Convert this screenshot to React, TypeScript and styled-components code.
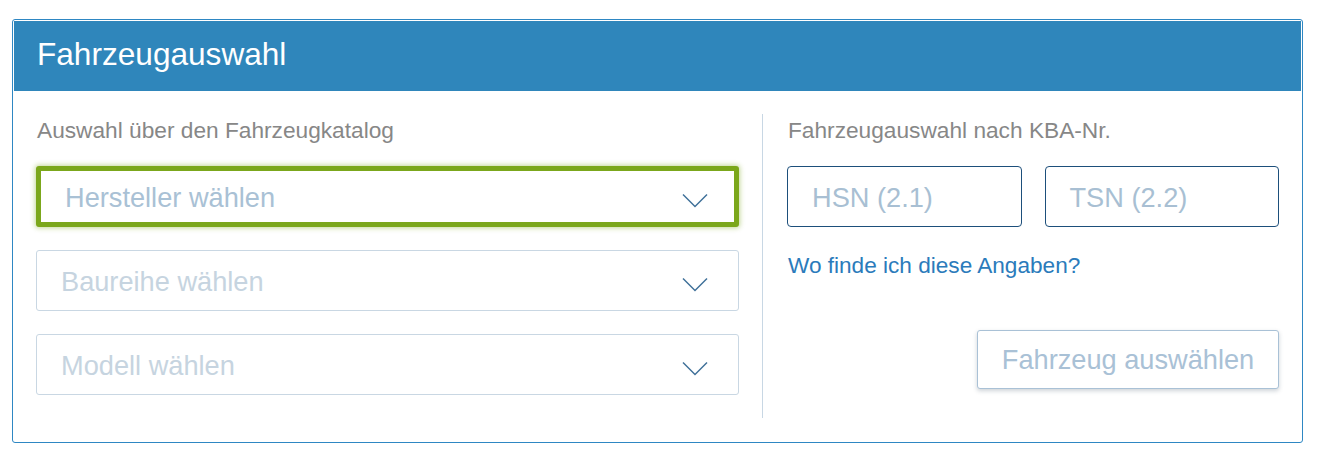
import React from "react";
import styled, { createGlobalStyle } from "styled-components";

const Global = createGlobalStyle`
  html, body { margin: 0; padding: 0; background: #ffffff; }
  body { font-family: "Liberation Sans", Arial, sans-serif; }
  * { box-sizing: border-box; }
`;

const Page = styled.div`
  padding: 19px 19px 0 12px;
`;

const Panel = styled.section`
  width: 1291px;
  border: 1px solid #2e87c3;
  border-radius: 3px;
  padding: 1px;
`;

const Header = styled.header`
  height: 70px;
  background: #2f86bb;
  color: #ffffff;
  display: flex;
  align-items: center;
  padding: 0 0 2px 23px;
  font-size: 31.6px;
  line-height: 1;
`;

const Body = styled.div`
  display: flex;
  padding: 23px 22px;
`;

const LeftCol = styled.div`
  width: 703px;
  display: flex;
  flex-direction: column;
`;

const Divider = styled.div`
  width: 1px;
  background: #c8d7e4;
  margin: 0 24px 0 23px;
`;

const RightCol = styled.div`
  flex: 1;
  display: flex;
  flex-direction: column;
`;

const Label = styled.div`
  font-size: 22.7px;
  line-height: 32px;
  color: #878787;
  margin-bottom: 20px;
  padding-left: 1px;
`;

const Select = styled.div<{ $focused?: boolean; $muted?: boolean }>`
  height: 61px;
  margin-bottom: 23px;
  display: flex;
  align-items: center;
  border-radius: 3px;
  border: ${(p) => (p.$focused ? "5px solid #7ba71b" : "1px solid #c9d7e3")};
  box-shadow: ${(p) => (p.$focused ? "0 0 5px 1px rgba(123, 167, 27, 0.45)" : "none")};
  padding: 2px ${(p) => (p.$focused ? 26 : 30)}px 0 24px;
  font-size: 27.2px;
  color: ${(p) => (p.$muted ? "#c6d4e0" : "#a9c1d5")};
  background: #fff;
`;

const SelectText = styled.span`
  flex: 1;
`;

const Chevron = styled.svg`
  display: block;
  margin-top: 6px;
`;

const InputRow = styled.div`
  display: flex;
  gap: 23px;
`;

const Field = styled.div`
  flex: 1;
  height: 61px;
  border: 1px solid #1d4f7b;
  border-radius: 4px;
  display: flex;
  align-items: center;
  padding: 2px 0 0 24px;
  font-size: 27.2px;
  color: #a8bfd3;
`;

const Link = styled.a`
  display: block;
  margin-top: 23px;
  font-size: 22.6px;
  line-height: 32px;
  color: #2b7bbb;
  text-decoration: none;
  padding-left: 1px;
`;

const Actions = styled.div`
  display: flex;
  justify-content: flex-end;
  margin-top: 48px;
`;

const Button = styled.button`
  width: 302px;
  height: 59px;
  border: 1px solid #a9c1d6;
  border-radius: 3px;
  background: #ffffff;
  box-shadow: 0 2px 4px rgba(60, 80, 100, 0.25);
  font-family: "Liberation Sans", Arial, sans-serif;
  font-size: 27.2px;
  color: #a9c1d6;
  padding: 0;
`;

const ChevronIcon = () => (
  <Chevron width="26" height="15" viewBox="0 0 26 15">
    <polyline points="1,1.5 13,13.5 25,1.5" fill="none" stroke="#40719a" strokeWidth="1.5" />
  </Chevron>
);

export default function App() {
  return (
    <>
      <Global />
      <Page>
        <Panel>
          <Header>Fahrzeugauswahl</Header>
          <Body>
            <LeftCol>
              <Label>Auswahl über den Fahrzeugkatalog</Label>
              <Select $focused>
                <SelectText>Hersteller wählen</SelectText>
                <ChevronIcon />
              </Select>
              <Select $muted>
                <SelectText>Baureihe wählen</SelectText>
                <ChevronIcon />
              </Select>
              <Select $muted>
                <SelectText>Modell wählen</SelectText>
                <ChevronIcon />
              </Select>
            </LeftCol>
            <Divider />
            <RightCol>
              <Label>Fahrzeugauswahl nach KBA-Nr.</Label>
              <InputRow>
                <Field>HSN (2.1)</Field>
                <Field>TSN (2.2)</Field>
              </InputRow>
              <Link href="#">Wo finde ich diese Angaben?</Link>
              <Actions>
                <Button>Fahrzeug auswählen</Button>
              </Actions>
            </RightCol>
          </Body>
        </Panel>
      </Page>
    </>
  );
}
